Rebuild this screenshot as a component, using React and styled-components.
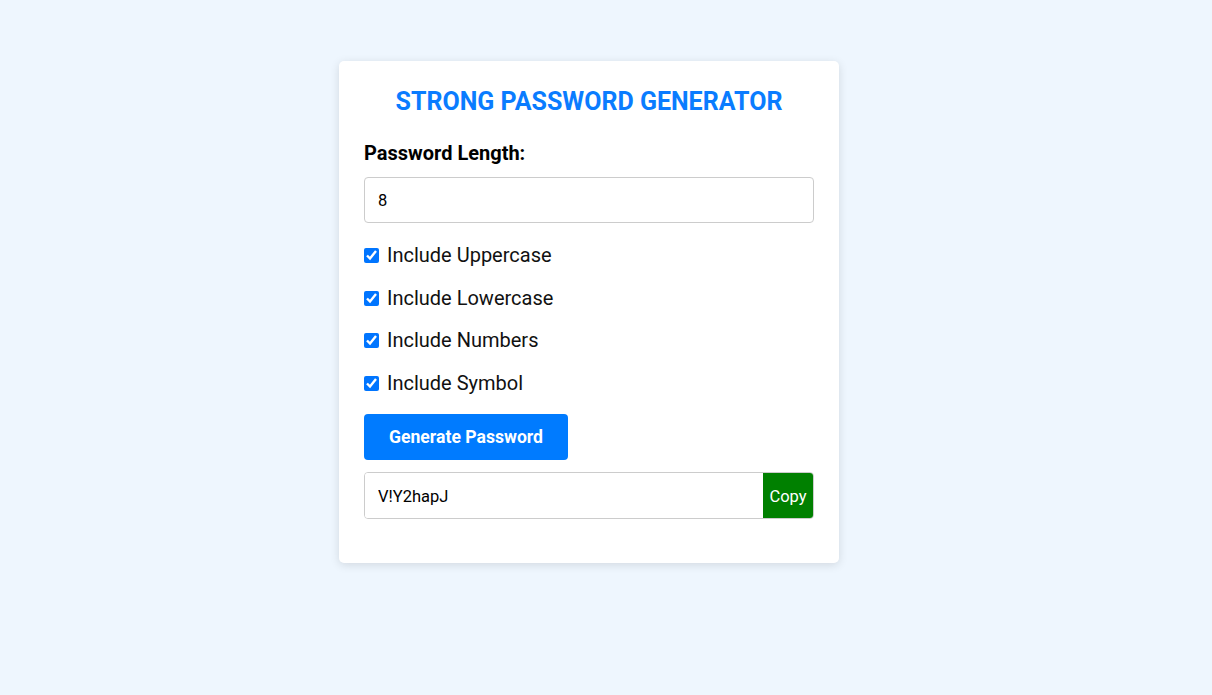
import { useState } from "react";
import styled, { createGlobalStyle } from "styled-components";

const GlobalStyle = createGlobalStyle`
  html, body {
    margin: 0;
    background: #eef6fe;
    font-family: Roboto, "Liberation Sans", sans-serif;
  }
`;

const options = [
  { key: "upper", label: "Include Uppercase" },
  { key: "lower", label: "Include Lowercase" },
  { key: "numbers", label: "Include Numbers" },
  { key: "symbols", label: "Include Symbol" },
];

export default function App() {
  const [length, setLength] = useState(8);
  const [checked, setChecked] = useState({
    upper: true,
    lower: true,
    numbers: true,
    symbols: true,
  });
  const [password] = useState("V!Y2hapJ");

  return (
    <Page>
      <GlobalStyle />
      <Card>
        <Title>STRONG PASSWORD GENERATOR</Title>

        <Label htmlFor="length">Password Length:</Label>
        <TextInput
          id="length"
          type="number"
          value={length}
          onChange={(e) => setLength(e.target.value)}
        />

        <Options>
          {options.map((opt) => (
            <CheckRow key={opt.key}>
              <input
                type="checkbox"
                checked={checked[opt.key]}
                onChange={() =>
                  setChecked({ ...checked, [opt.key]: !checked[opt.key] })
                }
              />
              {opt.label}
            </CheckRow>
          ))}
        </Options>

        <GenerateButton>Generate Password</GenerateButton>

        <ResultRow>
          <ResultInput type="text" value={password} readOnly />
          <CopyButton>Copy</CopyButton>
        </ResultRow>
      </Card>
    </Page>
  );
}

const Page = styled.div`
  display: flex;
  justify-content: center;
  align-items: flex-start;
  padding: 61px 34px 0 0;
  min-height: 100vh;
  box-sizing: border-box;
`;

const Card = styled.div`
  width: 500px;
  box-sizing: border-box;
  background: #fff;
  border-radius: 5px;
  padding: 25px 25px 44px;
  box-shadow: 0 2px 10px rgba(0, 0, 0, 0.12);
  display: flex;
  flex-direction: column;
  align-items: flex-start;
`;

const Title = styled.h2`
  align-self: stretch;
  text-align: center;
  color: #0a7cff;
  font-size: 25px;
  font-weight: 700;
  line-height: 28px;
  margin: 2px 0 27px;
`;

const Label = styled.label`
  font-size: 20px;
  font-weight: 700;
  line-height: 21px;
  color: #000;
  margin-bottom: 13px;
`;

const TextInput = styled.input`
  align-self: stretch;
  height: 46px;
  box-sizing: border-box;
  border: 1px solid #ccc;
  border-radius: 4px;
  padding: 1px 13px 0;
  font-family: inherit;
  font-size: 16.5px;
  color: #000;
  margin-bottom: 22px;
  outline: none;
  -moz-appearance: textfield;

  &::-webkit-inner-spin-button,
  &::-webkit-outer-spin-button {
    -webkit-appearance: none;
    margin: 0;
  }
`;

const Options = styled.div`
  display: flex;
  flex-direction: column;
  gap: 21.5px;
  margin-bottom: 20px;
`;

const CheckRow = styled.label`
  display: flex;
  align-items: center;
  font-size: 20px;
  line-height: 21px;
  color: #111;

  input {
    width: 15px;
    height: 15px;
    margin: 0 8px 0 0;
  }
`;

const GenerateButton = styled.button`
  height: 46px;
  padding: 0 25px;
  background: #007bff;
  color: #fff;
  border: none;
  border-radius: 4px;
  font-family: inherit;
  font-size: 17.6px;
  font-weight: 700;
  cursor: pointer;
  margin-bottom: 12px;
`;

const ResultRow = styled.div`
  align-self: stretch;
  display: flex;
  height: 47px;
  border: 1px solid #ccc;
  border-radius: 4px;
  box-sizing: border-box;
  overflow: hidden;
`;

const ResultInput = styled.input`
  flex: 1;
  min-width: 0;
  border: none;
  padding: 2px 13px 0;
  font-family: inherit;
  font-size: 16.5px;
  color: #000;
  outline: none;
`;

const CopyButton = styled.button`
  width: 50px;
  background: #008000;
  color: #fff;
  border: none;
  font-family: inherit;
  font-size: 16.5px;
  padding: 2px 0 0;
  cursor: pointer;
`;
